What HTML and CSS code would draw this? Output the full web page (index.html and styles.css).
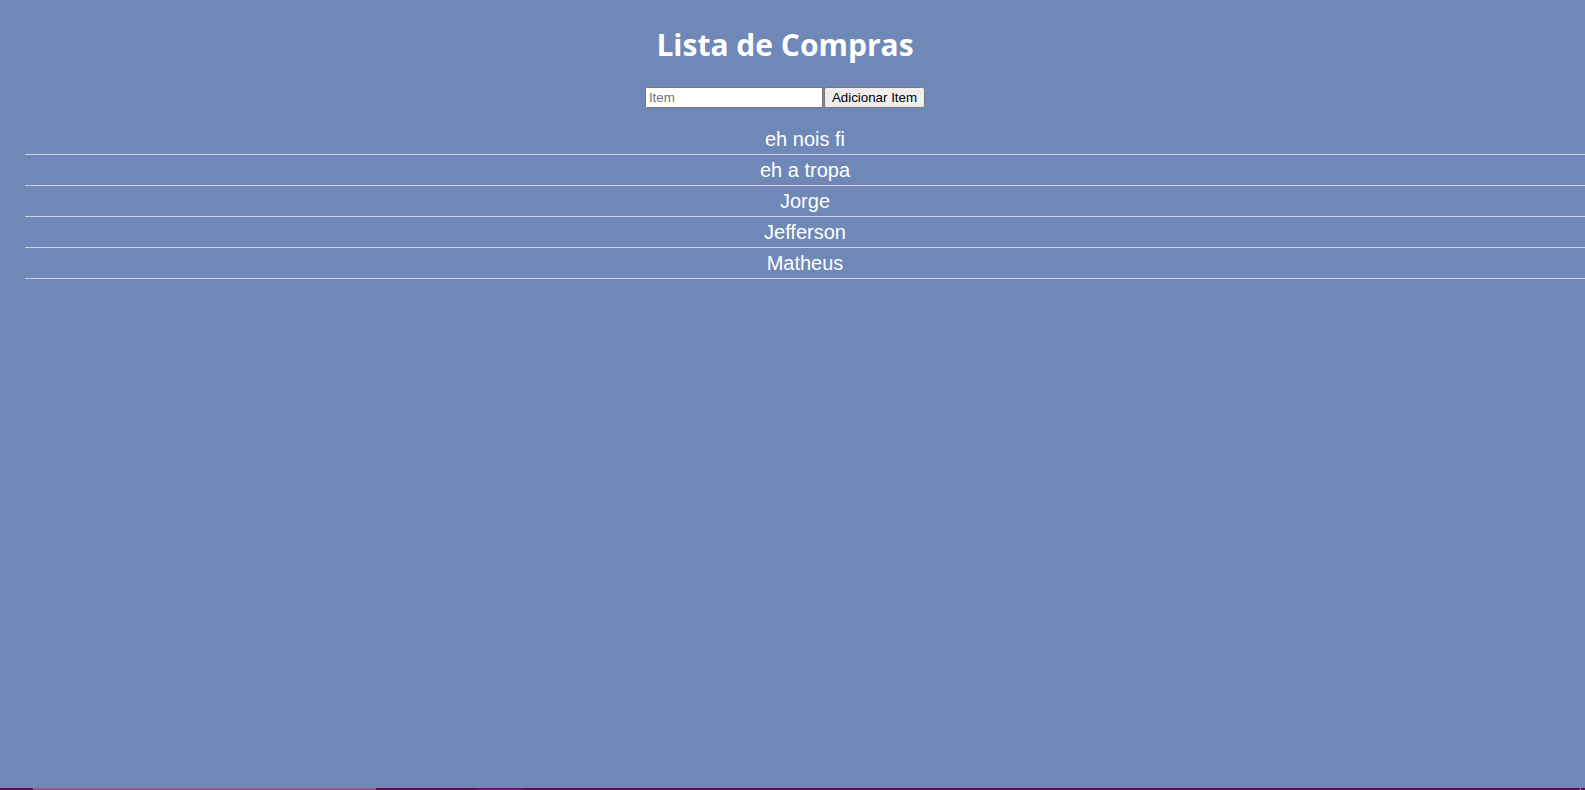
FILE: index.html
```html
<!DOCTYPE html>
<html lang="pt-BR">
<head>
<meta charset="utf-8">
<title>Lista de Compras</title>
<link rel="stylesheet" href="styles.css">
</head>
<body>
<header class="top">
  <h1 class="title">Lista de Compras</h1>
  <div class="form">
    <input class="field" type="text" placeholder="Item"><button class="add" type="button">Adicionar Item</button>
  </div>
</header>
<ul class="list">
  <li class="item">eh nois fi</li>
  <li class="item">eh a tropa</li>
  <li class="item">Jorge</li>
  <li class="item">Jefferson</li>
  <li class="item">Matheus</li>
</ul>
<div class="bar">
  <span class="seg thumb"></span>
  <span class="seg mark"></span>
  <span class="seg tick"></span>
</div>
</body>
</html>
```
FILE: styles.css
```css
html, body {
  background: #6f88b7;
}
body {
  margin: 0;
  font-family: "Liberation Sans", Arial, sans-serif;
  color: #fff;
  overflow: hidden;
}
.top {
  padding: 0 23px 0 8px;
  text-align: center;
}
.title {
  font-family: "Open Sans", "Noto Sans", sans-serif;
  font-weight: 700;
  font-size: 30px;
  line-height: 43px;
  margin: 0;
  padding: 23px 0 21px;
}
.form {
  display: flex;
  justify-content: center;
}
.field {
  font-family: "Liberation Sans", Arial, sans-serif;
  font-size: 13.333px;
  width: 170px;
  margin: 0;
}
.field::placeholder {
  color: #757575;
}
.add {
  font-family: "Liberation Sans", Arial, sans-serif;
  font-size: 13.333px;
  margin: 0 0 0 1px;
  color: #000;
}
.list {
  list-style: none;
  margin: 16px 0 0;
  padding: 0 0 0 25px;
}
.item {
  font-size: 20px;
  line-height: 23px;
  padding: 4px 0 3px;
  text-align: center;
  border-bottom: 1px solid #cfd3dc;
}
.bar {
  position: fixed;
  left: 0;
  right: 0;
  bottom: 0;
  height: 2px;
  background: #5a0a48;
  display: flex;
}
.seg {
  display: block;
  height: 2px;
}
.thumb {
  margin-left: 33px;
  width: 343px;
  background: #8a4a7e;
  border-top: 1px solid #a0608f;
  height: 1px;
}
.mark {
  margin-left: 100px;
  width: 48px;
  background: #780a6c;
}
.tick {
  margin-left: auto;
  margin-right: 4px;
  width: 1px;
  background: #b890b0;
}
```
